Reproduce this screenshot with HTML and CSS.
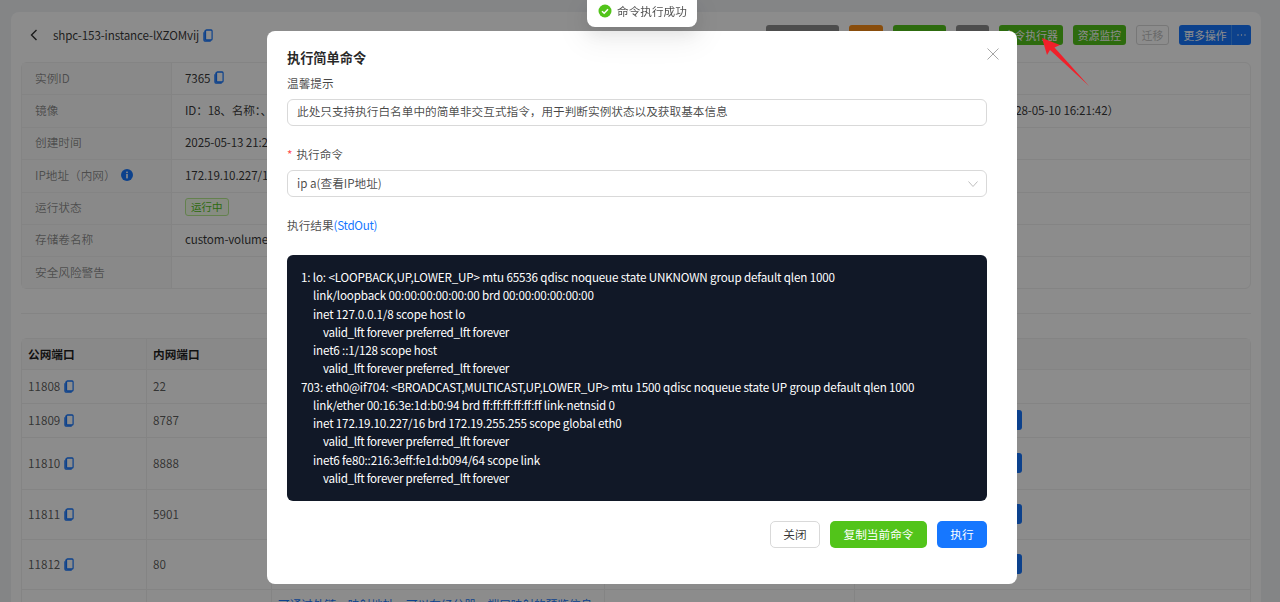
FILE: index.html
```html
<!DOCTYPE html>
<html lang="zh-CN">
<head>
<meta charset="utf-8">
<title>实例详情</title>
<link rel="stylesheet" href="styles.css">
</head>
<body>
<svg class="sprite" width="0" height="0" aria-hidden="true">
  <symbol id="copy" viewBox="0 0 11 13" preserveAspectRatio="none">
    <path d="M1 3.2 V11 a1 1 0 0 0 1 1 h6.5" fill="none" stroke="currentColor" stroke-width="1.3"/>
    <rect x="2.8" y="1" width="7.2" height="10" rx="1" fill="none" stroke="currentColor" stroke-width="1.3"/>
    <path d="M2.2 1.6 V11" stroke="currentColor" stroke-width="1.6"/>
  </symbol>
</svg>
<main class="page">
  <section class="card">
    <header class="head">
      <div class="crumb">
        <svg class="back" viewBox="0 0 10 12" width="10" height="12"><path d="M7.5 1 L2.5 6 L7.5 11" fill="none" stroke="currentColor" stroke-width="1.4"/></svg>
        <span>shpc-153-instance-lXZOMvij</span>
        <svg class="copy"><use href="#copy"/></svg>
      </div>
      <div class="actions">
        <button class="btn btn-grey w73"></button>
        <button class="btn btn-orange w34"></button>
        <button class="btn btn-green w53"></button>
        <button class="btn btn-grey w33"></button>
        <button class="btn btn-green w64">命令执行器</button>
        <button class="btn btn-green">资源监控</button>
        <button class="btn btn-disabled w33">迁移</button>
        <div class="split">
          <button class="btn btn-blue split-main">更多操作</button>
          <button class="btn btn-blue split-more" aria-label="更多"><svg class="dots" viewBox="0 0 9 2" width="9" height="2"><circle cx="1" cy="1" r=".7"/><circle cx="4.5" cy="1" r=".7"/><circle cx="8" cy="1" r=".7"/></svg></button>
        </div>
      </div>
    </header>

    <div class="desc">
      <div class="desc-row"><div class="desc-label">实例ID</div><div class="desc-value">7365 <svg class="copy"><use href="#copy"/></svg></div></div>
      <div class="desc-row"><div class="desc-label">镜像</div><div class="desc-value desc-split"><span>ID：18、名称：、</span><span>到期时间：2028-05-10 16:21:42）</span></div></div>
      <div class="desc-row"><div class="desc-label">创建时间</div><div class="desc-value">2025-05-13 21:21:42</div></div>
      <div class="desc-row"><div class="desc-label">IP地址（内网）<svg class="info" viewBox="0 0 12 12" width="12" height="12"><circle cx="6" cy="6" r="6" fill="currentColor"/><rect x="5.2" y="5" width="1.6" height="4.4" fill="#fff"/><rect x="5.2" y="2.6" width="1.6" height="1.5" fill="#fff"/></svg></div><div class="desc-value">172.19.10.227/16</div></div>
      <div class="desc-row"><div class="desc-label">运行状态</div><div class="desc-value"><span class="tag">运行中</span></div></div>
      <div class="desc-row"><div class="desc-label">存储卷名称</div><div class="desc-value">custom-volume-153</div></div>
      <div class="desc-row"><div class="desc-label">安全风险警告</div><div class="desc-value"></div></div>
    </div>

    <hr class="divider">

    <div class="ports">
      <div class="port-row port-head"><div class="c1">公网端口</div><div class="c2">内网端口</div><div class="c3"></div><div class="c4"></div><div class="c5"></div></div>
      <div class="port-row h34"><div class="c1">11808 <svg class="copy"><use href="#copy"/></svg></div><div class="c2">22</div><div class="c3"></div><div class="c4"></div><div class="c5"></div></div>
      <div class="port-row h34"><div class="c1">11809 <svg class="copy"><use href="#copy"/></svg></div><div class="c2">8787</div><div class="c3"></div><div class="c4"></div><div class="c5"><span class="row-btn"></span></div></div>
      <div class="port-row h52"><div class="c1">11810 <svg class="copy"><use href="#copy"/></svg></div><div class="c2">8888</div><div class="c3"></div><div class="c4"></div><div class="c5"><span class="row-btn"></span></div></div>
      <div class="port-row h50"><div class="c1">11811 <svg class="copy"><use href="#copy"/></svg></div><div class="c2">5901</div><div class="c3"></div><div class="c4"></div><div class="c5"><span class="row-btn"></span></div></div>
      <div class="port-row h50"><div class="c1">11812 <svg class="copy"><use href="#copy"/></svg></div><div class="c2">80</div><div class="c3"></div><div class="c4"></div><div class="c5"><span class="row-btn"></span></div></div>
      <div class="port-row port-last"><div class="c1"></div><div class="c2"></div><div class="c3 link-text">可通过外链，映射地址，可以在经分器，端口映射的预览信息</div><div class="c4"></div><div class="c5"></div></div>
    </div>
  </section>
</main>

<div class="mask"></div>

<svg class="arrow" viewBox="0 0 60 60" width="60" height="60"><polygon points="12,6 30,13 24.5,15.5 59,54 20,18 17,23" fill="#f0202a"/></svg>

<div class="toast">
  <svg class="toast-icon" viewBox="0 0 14 14" width="14" height="14"><circle cx="7" cy="7" r="6.5" fill="#52c41a"/><path d="M4 7.2 L6.2 9.3 L10 5.2" fill="none" stroke="#fff" stroke-width="1.5"/></svg>
  <span>命令执行成功</span>
</div>

<div class="modal" role="dialog">
  <svg class="close" viewBox="0 0 12 12" width="12" height="12"><path d="M.5 .5 L11.5 11.5 M11.5 .5 L.5 11.5" stroke="currentColor" stroke-width="1"/></svg>
  <h2 class="modal-title">执行简单命令</h2>
  <div class="field-label">温馨提示</div>
  <div class="input">此处只支持执行白名单中的简单非交互式指令，用于判断实例状态以及获取基本信息</div>
  <div class="field-label field-gap"><span class="req">*</span>执行命令</div>
  <div class="input select">ip a(查看IP地址)
    <svg class="chev" viewBox="0 0 10 6" width="10" height="6"><path d="M.5 .5 L5 5.5 L9.5 .5" fill="none" stroke="currentColor" stroke-width="1"/></svg>
  </div>
  <div class="result-label">执行结果<span class="std">(StdOut)</span></div>
  <pre class="terminal">1: lo: &lt;LOOPBACK,UP,LOWER_UP&gt; mtu 65536 qdisc noqueue state UNKNOWN group default qlen 1000
<span class="in1">link/loopback 00:00:00:00:00:00 brd 00:00:00:00:00:00</span>
<span class="in1">inet 127.0.0.1/8 scope host lo</span>
<span class="in2">valid_lft forever preferred_lft forever</span>
<span class="in1">inet6 ::1/128 scope host</span>
<span class="in2">valid_lft forever preferred_lft forever</span>
703: eth0@if704: &lt;BROADCAST,MULTICAST,UP,LOWER_UP&gt; mtu 1500 qdisc noqueue state UP group default qlen 1000
<span class="in1">link/ether 00:16:3e:1d:b0:94 brd ff:ff:ff:ff:ff:ff link-netnsid 0</span>
<span class="in1">inet 172.19.10.227/16 brd 172.19.255.255 scope global eth0</span>
<span class="in2">valid_lft forever preferred_lft forever</span>
<span class="in1">inet6 fe80::216:3eff:fe1d:b094/64 scope link</span>
<span class="in2">valid_lft forever preferred_lft forever</span></pre>
  <div class="modal-foot">
    <button class="mbtn mbtn-plain">关闭</button>
    <button class="mbtn mbtn-green">复制当前命令</button>
    <button class="mbtn mbtn-blue">执行</button>
  </div>
</div>
</body>
</html>
```

FILE: styles.css
```css
* { box-sizing: border-box; }
html, body { margin: 0; height: 100%; }
body {
  overflow: hidden;
  background: #f0f2f5;
  color: rgba(0,0,0,.88);
  font: 11.65px/1.4 "Noto Sans CJK SC", sans-serif;
}
.sprite { position: absolute; }
.page { padding: 12px 19px 0 11px; height: 100%; overflow: hidden; }
.card { background: #fff; border-radius: 8px; padding: 13px 10px 0; min-height: 700px; }
.head { display: flex; justify-content: space-between; align-items: center; height: 20px; margin-bottom: 17px; }
.crumb { display: flex; align-items: center; padding-left: 8px; letter-spacing: -.14px; color: rgba(0,0,0,.8); }
.back { margin-right: 14px; }
.copy { width: 10px; height: 13px; color: #1677ff; margin-left: 2px; flex: none; }
.crumb .copy { margin-left: 4px; }
.actions { display: flex; gap: 10px; }
.btn { height: 20px; border: 0; border-radius: 3px; padding: 0 5px; font: inherit; font-size: 10.8px; line-height: 20px; color: #fff; }
.w73 { width: 73px; } .w34 { width: 34px; } .w53 { width: 53px; } .w33 { width: 33px; }
.w64 { width: 64px; padding: 0; }
.btn-grey { background: #8c8c8c; }
.btn-orange { background: #fa8c16; }
.btn-green { background: #52c41a; }
.btn-blue { background: #1677ff; }
.btn-disabled { background: #fff; border: 1px solid #d9d9d9; color: #bfbfbf; line-height: 18px; padding: 0; }
.split { display: flex; }
.split-main { border-radius: 3px 0 0 3px; border-right: 1px solid #4096ff; width: 53px; padding: 0; }
.split-more { border-radius: 0 3px 3px 0; width: 19px; padding: 0; display: flex; align-items: center; justify-content: center; }
.dots { fill: #fff; }

.desc { border: 1px solid #f0f0f0; border-radius: 6px; }
.desc-row { display: flex; height: 32.4px; border-bottom: 1px solid #f0f0f0; }
.desc-row:last-child { border-bottom: 0; height: 31px; }
.desc-label { width: 150px; flex: none; display: flex; align-items: center; padding: 0 0 2px 13px; color: rgba(0,0,0,.45); background: #fafafa; border-right: 1px solid #f0f0f0; }
.info { margin-left: 5px; color: #1677ff; }
.desc-value { flex: 1; display: flex; align-items: center; gap: 2px; padding: 0 0 2px 13px; letter-spacing: -.14px; color: rgba(0,0,0,.8); }
.desc-split { justify-content: space-between; padding-right: 131px; }
.tag { display: block; height: 18px; line-height: 16px; padding: 0 5px; font-size: 10.5px; letter-spacing: 0; color: #52c41a; background: #f6ffed; border: 1px solid #b7eb8f; border-radius: 3px; }
.divider { border: 0; border-top: 1px solid #f0f0f0; margin: 24px 0; }

.ports { border: 1px solid #f0f0f0; border-radius: 6px 6px 0 0; }
.port-row { display: flex; border-bottom: 1px solid #f0f0f0; color: rgba(0,0,0,.65); }
.port-row > div { display: flex; align-items: center; padding: 0 6px 1px; border-right: 1px solid #f0f0f0; gap: 2px; }
.port-row > div:last-child { border-right: 0; }
.c1, .c2 { width: 125px; flex: none; }
.c3 { width: 333px; flex: none; }
.c4 { width: 250px; flex: none; }
.c5 { flex: 1; }
.port-head { height: 31px; font-weight: 700; color: rgba(0,0,0,.88); background: #fafafa; }
.h34 { height: 34px; } .h52 { height: 52px; } .h50 { height: 50px; }
.port-last { height: 40px; }
.port-last > div { align-items: flex-start; padding-top: 6px; }
.link-text { color: #1677ff; white-space: nowrap; }
.row-btn { display: block; width: 153px; height: 20px; margin-left: 8px; background: #1677ff; border-radius: 3px; }

.mask { position: fixed; inset: 0; background: rgba(0,0,0,.45); }
.arrow { position: fixed; left: 1030px; top: 32px; }
.toast { position: fixed; z-index: 3; left: 587px; top: 0; width: 110px; height: 27px; display: flex; align-items: center; gap: 5px; padding: 0 0 5px 11px; background: #fff; border-radius: 0 0 8px 8px; color: rgba(0,0,0,.7); box-shadow: 0 6px 16px rgba(0,0,0,.08), 0 9px 28px 8px rgba(0,0,0,.05); }
.toast-icon { flex: none; }

.modal { position: fixed; z-index: 2; left: 267px; top: 31px; width: 750px; height: 553px; padding: 18px 30px 0 20px; background: #fff; border-radius: 8px; color: rgba(0,0,0,.72); display: flex; flex-direction: column; }
.close { position: absolute; right: 18px; top: 17px; color: #a6a6a6; }
.modal-title { margin: 0; height: 17px; line-height: 17px; font-size: 13.2px; font-weight: 700; color: rgba(0,0,0,.85); }
.field-label { margin-top: 8px; height: 17px; line-height: 17px; }
.field-gap { margin-top: 19.5px; }
.req { color: #ff4d4f; margin-right: 4px; }
.input { position: relative; flex: none; height: 26.5px; margin-top: 8px; padding: 0 9px; line-height: 22px; border: 1px solid #d9d9d9; border-radius: 6px; }
.select { line-height: 24px; }
.chev { position: absolute; right: 8px; top: 10px; color: #bfbfbf; }
.result-label { margin-top: 19.5px; height: 17px; line-height: 17px; }
.std { color: #1677ff; letter-spacing: -.3px; }
.terminal { margin: 22px 0 0; flex: none; height: 246px; padding: 13px 14px 0; background: #111827; color: #fff; border-radius: 6px; font: inherit; letter-spacing: -.16px; line-height: 18.27px; white-space: pre; overflow: hidden; }
.in1 { margin-left: 12px; }
.in2 { margin-left: 22px; letter-spacing: -.3px; }
.modal-foot { display: flex; justify-content: flex-end; gap: 10px; margin-top: 20px; }
.mbtn { height: 27px; border: 0; border-radius: 5px; padding: 0; font: inherit; }
.mbtn-plain { width: 50px; background: #fff; border: 1px solid #d9d9d9; color: rgba(0,0,0,.8); }
.mbtn-green { width: 97px; background: #52c41a; color: #fff; }
.mbtn-blue { width: 50px; background: #1677ff; color: #fff; }
```
